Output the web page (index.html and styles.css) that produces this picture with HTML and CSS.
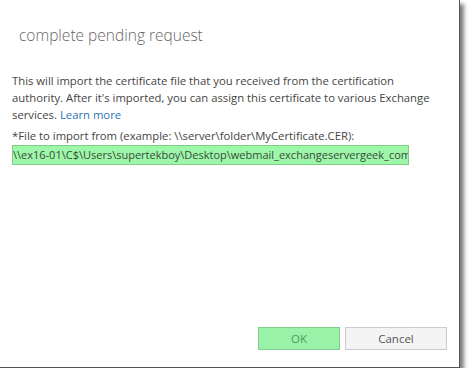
FILE: index.html
```html
<!DOCTYPE html>
<html lang="en">
<head>
    <meta charset="UTF-8">
    <title>complete pending request</title>
    <link rel="stylesheet" href="styles.css">
</head>
<body>

    <div class="dialog">
        <div class="dialog-title">complete pending request</div>

        <div class="dialog-body">
            <p class="intro">This will import the certificate file that you received from the certification<br>
                authority. After it's imported, you can assign this certificate to various Exchange<br>
                services. <a href="#" class="learn-more">Learn more</a></p>

            <label class="field-label" for="file-path">*File to import from (example: \\server\folder\MyCertificate.CER):</label>
            <div class="field-input" id="file-path">\\ex16-01\C$\Users\supertekboy\Desktop\webmail_exchangeservergeek_com.cer</div>
        </div>

        <div class="dialog-buttons">
            <button class="btn btn-ok">OK</button>
            <button class="btn btn-cancel">Cancel</button>
        </div>
    </div>

</body>
</html>
```

FILE: styles.css
```css
body {
    margin: 0;
    padding: 0;
    background-color: #fff;
    font-family: 'Open Sans', 'Noto Sans', sans-serif;
}

.dialog {
    width: 460px;
    height: 368px;
    box-sizing: border-box;
    background-color: #fff;
    border-right: 1px solid #555;
    border-bottom: 1px solid #555;
    box-shadow: 4px 4px 4px rgba(0, 0, 0, 0.5);
    display: flex;
    flex-direction: column;
}

.dialog-title {
    padding: 24px 0 0 19px;
    font-size: 15.5px;
    font-weight: 300;
    color: #666;
    height: 49px;
    box-sizing: border-box;
}

.dialog-body {
    padding: 23px 12px 0 12px;
    flex: 1;
}

.intro {
    margin: 0 0 4px 0;
    font-size: 11.3px;
    line-height: 17px;
    color: #444;
}

.learn-more {
    color: #2a75b8;
    text-decoration: none;
}

.field-label {
    display: block;
    font-size: 11.3px;
    line-height: 17px;
    color: #444;
    margin-bottom: 1px;
}

.field-input {
    width: 397px;
    height: 20px;
    box-sizing: border-box;
    background-color: #9ef7a9;
    border: 1px solid #7fcf8a;
    font-size: 11px;
    line-height: 18px;
    color: #3a4a3d;
    white-space: nowrap;
    overflow: hidden;
}

.dialog-buttons {
    display: flex;
    justify-content: flex-end;
    gap: 5px;
    padding: 0 12px 17px 0;
}

.btn {
    height: 23px;
    font-family: inherit;
    font-size: 11.5px;
    border-radius: 0;
    padding: 0;
}

.btn-ok {
    width: 82px;
    background-color: #98f2a8;
    border: 1px solid #7fcf8a;
    color: #4f9a5e;
}

.btn-cancel {
    width: 102px;
    background-color: #f4f4f4;
    border: 1px solid #ccc;
    color: #555;
}
```
